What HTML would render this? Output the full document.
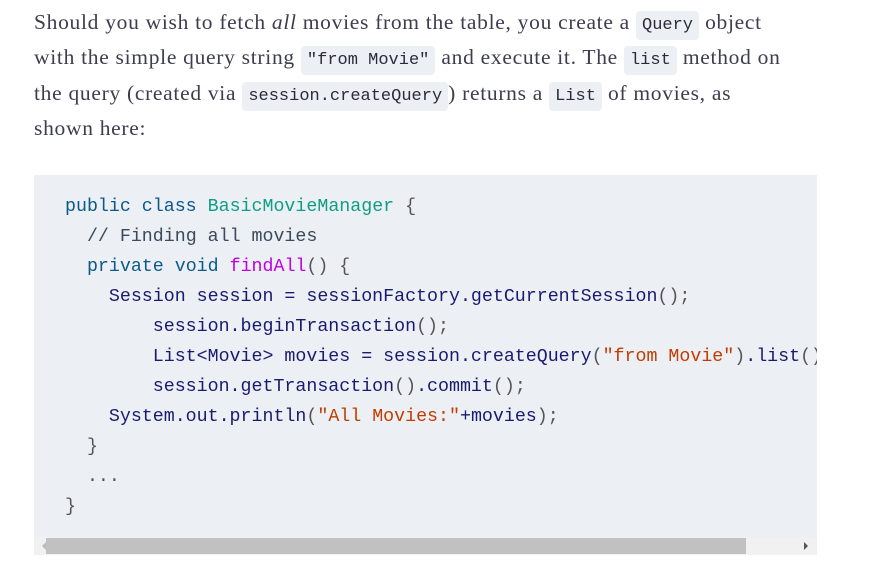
<!DOCTYPE html>
<html><head><meta charset="utf-8"><style>
body{margin:0;background:#fff;width:875px;height:569px;overflow:hidden}
p{position:absolute;left:34px;top:5px;margin:0;width:840px;font:21.5px/35.3px "Liberation Serif",serif;letter-spacing:0.7px;color:#3d3d4e;white-space:nowrap}
code{font:17px "Liberation Mono",monospace;letter-spacing:0;background:#eceff4;border-radius:4px;padding:5px 6px;color:#2b2b3a}
.blk{position:absolute;left:34px;top:175px;width:783px;height:380px;background:#eceff4;overflow:hidden}
pre{position:absolute;left:31px;top:17px;margin:0;font:18.3px/30px "Liberation Mono",monospace;color:#1a1a6e;white-space:pre}
.k{color:#0b5a8a}.t{color:#0e9e83}.c{color:#3a4a5a}.f{color:#c000e0}.s{color:#c03c00}.p{color:#555}
.sb{position:absolute;left:0;top:362px;width:783px;height:18px;background:#f1f1f1}
.th{position:absolute;left:12px;top:1px;width:700px;height:16px;background:#c1c1c1}
</style></head><body>
<p>Should you wish to fetch <i>all</i> movies from the table, you create a <code>Query</code> object<br>with the simple query string <code>"from Movie"</code> and execute it. The <code>list</code> method on<br>the query (created via <code>session.createQuery</code>) returns a <code>List</code> of movies, as<br>shown here:</p>
<div class="blk"><pre><span class="k">public class</span> <span class="t">BasicMovieManager</span> <span class="p">{</span>
  <span class="c">// Finding all movies</span>
  <span class="k">private void</span> <span class="f">findAll</span><span class="p">() {</span>
    Session session = sessionFactory.getCurrentSession<span class="p">();</span>
        session.beginTransaction<span class="p">();</span>
        List&lt;Movie&gt; movies = session.createQuery<span class="p">(</span><span class="s">"from Movie"</span><span class="p">)</span>.list<span class="p">();</span>
        session.getTransaction<span class="p">()</span>.commit<span class="p">();</span>
    System.out.println<span class="p">(</span><span class="s">"All Movies:"</span>+movies<span class="p">);</span>
  <span class="p">}</span>
  <span class="p">...</span>
<span class="p">}</span></pre>
<div class="sb"><div class="th"></div>
<div style="position:absolute;left:8px;top:5px;border:4px solid transparent;border-right:4px solid #bbb;border-left:0"></div>
<div style="position:absolute;right:9px;top:5px;border:4px solid transparent;border-left:4px solid #555;border-right:0"></div>
</div></div>
</body></html>
